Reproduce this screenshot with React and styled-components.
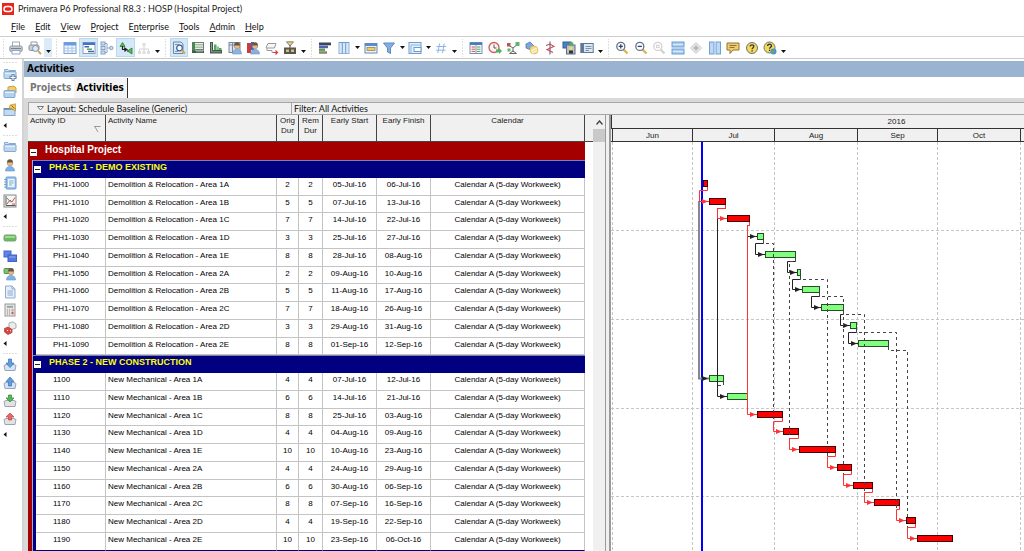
import React from "react";
import styled, { createGlobalStyle, css } from "styled-components";

const ui = '"Lato", "Open Sans", sans-serif';
const caption = '"DejaVu Sans Condensed", "DejaVu Sans", sans-serif';
const plain = '"Liberation Sans", Arial, sans-serif';

const GlobalStyle = createGlobalStyle`
  *, *::before, *::after { box-sizing: border-box; }
  body { margin: 0; background: #fff; color: #222; font-family: ${plain}; }
  button { margin: 0; padding: 0; border: 0; background: none; color: inherit; font: inherit; }
`;

/* ---------- shell ---------- */

const Window = styled.div`
  display: flex;
  flex-direction: column;
  min-height: 100vh;
  overflow: hidden;
`;

const TitleBar = styled.header`
  display: flex;
  align-items: center;
  gap: 4px;
  height: 18px;
  padding-left: 2px;
  font: 9px/18px ${ui};
`;

const MenuBar = styled.nav`
  display: flex;
  align-items: center;
  gap: 10px;
  height: 19px;
  padding-left: 11px;
  border-bottom: 1px solid #cfcfcf;
  font: 9px/18px ${ui};
  color: #111;
`;

const Mnemonic = styled.span`
  text-decoration: underline;
`;

const ToolBar = styled.div`
  display: flex;
  height: 22px;
  border-bottom: 1px solid #c8c8c8;
`;

const ToolGroup = styled.div`
  display: flex;
  align-items: center;
  &::before {
    content: "";
    width: ${(p) => (p.$first ? 7 : 9)}px;
    height: 18px;
    background: radial-gradient(circle, #bdbdbd 1px, transparent 1px) center / 3px 3px repeat-y;
  }
`;

const ToolButton = styled.button`
  display: flex;
  align-items: center;
  justify-content: center;
  width: 18px;
  height: 19px;
  &:nth-of-type(even) { width: 19px; }
  ${(p) => p.$on && css`
    background: #d5e8f8;
    box-shadow: inset 0 0 0 1px #b9d8f2;
  `}
`;

const DropButton = styled.button`
  display: flex;
  align-items: center;
  justify-content: center;
  width: 8px;
  height: 19px;
`;

const MoreButton = styled(DropButton)`
  align-items: flex-end;
  padding-bottom: 4px;
  background: ${(p) => (p.$lit ? "#dcebf8" : "none")};
`;

const Body = styled.div`
  display: flex;
  flex: 1;
`;

const SideBar = styled.aside`
  display: flex;
  flex-direction: column;
  flex: 0 0 24px;
  padding-right: 3px;
  border-right: 2px solid #d4d4d4;
`;

const SideGroup = styled.div`
  display: flex;
  flex-direction: column;
  &::before {
    content: "";
    height: 6px;
    margin: 0 1px 0 2px;
    background: radial-gradient(circle, #bdbdbd 1px, transparent 1px) center / 3px 3px repeat-x;
  }
`;

const SideButton = styled.button`
  display: flex;
  align-items: center;
  justify-content: center;
  height: 18px;
`;

const SideMore = styled.button`
  display: flex;
  align-items: center;
  height: 13px;
  padding-left: 3px;
`;

const Main = styled.main`
  display: flex;
  flex-direction: column;
  flex: 1;
  min-width: 0;
`;

const ViewTitle = styled.h1`
  height: 16px;
  margin: 2px 0 1px;
  padding-left: 3px;
  background: #9ab3d0;
  color: #000;
  font: bold 10px/16px ${caption};
`;

const Tabs = styled.div`
  display: flex;
  height: 20px;
`;

const Tab = styled.button`
  padding: 0 3px 0 ${(p) => (p.$active ? 2 : 6)}px;
  font: bold 10px/20px ${caption};
  color: ${(p) => (p.$active ? "#000" : "#777")};
  background: ${(p) => (p.$active ? "#f4f4f4" : "none")};
  border-right: ${(p) => (p.$active ? "1px solid #333" : "0")};
`;

const Workspace = styled.section`
  display: flex;
  flex-direction: column;
  flex: 1;
  padding: 4px 0 0 4px;
  background: #d9d9d9;
`;

const LayoutBar = styled.div`
  display: flex;
  height: 13px;
  border: solid #a6a6a6;
  border-width: 1px 0 1px 1px;
  background: #f0f0f0;
  font: 9px/12px ${ui};
  color: #111;
`;

const LayoutName = styled.button`
  display: flex;
  align-items: center;
  gap: 3px;
  flex: 0 0 263px;
  padding-left: 8px;
  border-right: 1px solid #a6a6a6;
`;

const FilterName = styled.div`
  padding-left: 2px;
`;

const Split = styled.div`
  display: flex;
  flex: 1;
`;

/* ---------- activity table ---------- */

const TablePane = styled.div`
  flex: 0 0 565px;
  background: linear-gradient(#f0f0f0 26px, #444 26px, #444 27px, #fff 27px);
`;

const Table = styled.table`
  width: 557px;
  table-layout: fixed;
  border-collapse: separate;
  border-spacing: 0;
  background: #fff;
`;

const HeadCell = styled.th`
  height: 27px;
  padding: 1px 2px 0;
  border-right: 1px solid #444;
  border-bottom: 1px solid #444;
  background: #f0f0f0;
  vertical-align: top;
  text-align: ${(p) => (p.$left ? "left" : "center")};
  font: 8px/10px ${plain};
  color: #222;
`;

const SortMark = styled.svg`
  display: block;
  margin: 0 2px 0 auto;
`;

const Row = styled.tr`
  height: 18px;
  &:nth-child(4n) { height: 17px; }
`;

const Cell = styled.td`
  height: inherit;
  padding: 0 2px 0 ${(p) => (p.$indent ? 17 : 2)}px;
  border-right: 1px solid #c4c4c4;
  border-bottom: 1px solid #c4c4c4;
  vertical-align: top;
  text-align: ${(p) => (p.$left ? "left" : "center")};
  white-space: nowrap;
  font: 8px/13px ${plain};
  color: #000;
  tr:last-child > & { border-bottom-color: #000080; }
`;

const Strip = styled.td`
  padding: 0;
  background: ${(p) => p.$color};
  border-right: ${(p) => (p.$edge ? "1px solid #a9a9cf" : "0")};
`;

const Band = styled.td`
  height: inherit;
  padding: 0 0 0 ${(p) => (p.$top ? 2 : 1)}px;
  background: ${(p) => (p.$top ? "#a50000" : "#000080")};
  border-top: ${(p) => (p.$top ? "0" : "1px solid #7f7fb8")};
  vertical-align: top;
  color: ${(p) => (p.$top ? "#fff" : "#ff0")};
  font: ${(p) => (p.$top ? "bold 10px/16px" : "bold 9px/13px")} ${plain};
`;

const BandLine = styled.div`
  display: flex;
  gap: 8px;
  height: ${(p) => (p.$top ? 16 : 14)}px;
`;

const Collapse = styled.button`
  display: flex;
  align-items: center;
  align-self: flex-end;
  justify-content: center;
  width: 7px;
  height: 7px;
  margin-bottom: 2px;
  background: #fff;
  &::before {
    content: "";
    width: 5px;
    height: 1px;
    background: #222;
  }
`;

const ScrollBar = styled.div`
  flex: 0 0 12px;
  background: #f0f0f0;
`;

const ScrollUp = styled.button`
  display: flex;
  align-items: center;
  justify-content: center;
  width: 100%;
  height: 14px;
`;

const Thumb = styled.div`
  height: 13px;
  background: #c9c9c9;
`;

const Splitter = styled.div`
  flex: 0 0 6px;
  border: solid #9a9a9a;
  border-width: 0 2px 0 1px;
  background: #f0f0f0;
`;

/* ---------- gantt ---------- */

const GanttPane = styled.div`
  display: flex;
  flex-direction: column;
  flex: 1;
  min-width: 0;
  overflow: hidden;
  background: #fff;
`;

const Scale = styled.div`
  display: flex;
  background: #f0f0f0;
  border-bottom: 1px solid #333;
  font: 8px/13px ${plain};
  color: #222;
  text-align: center;
`;

const Year = styled.div`
  flex: 0 0 570px;
  height: 13px;
  border-left: 1px solid #333;
`;

const Month = styled.div`
  flex: 0 0 ${(p) => p.$w}px;
  height: 12px;
  border-right: 1px solid #333;
`;

const Plot = styled.svg`
  display: block;
  width: 100%;
  height: 409px;
`;

/* ---------- icons ---------- */

const Ico = ({ children, size = 14 }) => (
  <svg width={size} height={size} viewBox="0 0 14 14" fill="none" aria-hidden="true">
    {children}
  </svg>
);

const folder = (
  <>
    <path d="M1.5 4V2.5H5L6 3.5H12.5V4.5" fill="#cfe2f5" stroke="#86a9cf" />
    <rect x="1" y="4.5" width="12" height="7" rx="1" fill="#bcd6f0" stroke="#86a9cf" />
    <path d="M2 6.5H12" stroke="#e4f0fb" />
  </>
);
const lens = (c, inner) => (
  <>
    <path d="M8.5 8.5L12.5 12.5" stroke={c === "#d2d2d2" ? "#d2d2d2" : "#dcb45a"} strokeWidth="2.4" />
    <circle cx="5.8" cy="5.4" r="4" fill="#fff" stroke={c} strokeWidth="1.3" />
    {inner}
  </>
);
const person = (x, shirt) => (
  <>
    <circle cx={x} cy="5" r="2.8" fill="#e7bb88" stroke="#9a7a58" strokeWidth=".6" />
    <path d={`M${x - 2.9} 4.4a2.900 3.200 0 0 1 5.800 0z`} fill="#6b5540" />
    <path d={`M${x - 4.5} 13c0-3 1.500-4.500 4.500-4.500s4.500 1.500 4.500 4.500z`} fill={shirt} stroke="#6d95c2" strokeWidth=".6" />
  </>
);
const tray = (c) => (
  <path d="M1 7.500L3 6.500H11L13 7.500L12 12.500H2Z" fill={c} stroke="#9aa5b2" />
);

const icons = {
  print: (
    <>
      <rect x="3.500" y="1" width="7" height="5" fill="#fff" stroke="#a5a9b0" />
      <rect x=".8" y="5" width="12.400" height="5.500" rx="1.500" fill="#c4ccd6" stroke="#8e97a5" />
      <path d="M2 7.500H12" stroke="#78828f" />
      <path d="M3 9.500H11V13H3Z" fill="#fff" stroke="#8fa6c4" />
    </>
  ),
  preview: (
    <>
      <path d="M3 4V1H9V4" fill="#fff" stroke="#999" />
      <rect x="1" y="4" width="10" height="5.500" rx="1.500" fill="#c9ced4" stroke="#8a919b" />
      <circle cx="7.500" cy="7.500" r="3" fill="#dfeaf5" stroke="#7d90a8" />
      <path d="M10 10L13 13" stroke="#c9a467" strokeWidth="2" />
    </>
  ),
  table: (
    <>
      <rect x="1" y="1.500" width="12" height="11" fill="#f2f8fe" stroke="#7fa3cf" />
      <rect x="1" y="1.500" width="12" height="3" fill="#6a9be0" />
      <path d="M5 4.500V12.500M9 4.500V12.500M1 7.200H13M1 9.900H13" stroke="#9dbbe0" strokeWidth=".8" />
    </>
  ),
  gantt: (
    <>
      <rect x="1" y="1.500" width="12" height="11" fill="#fff" stroke="#8f9fb5" />
      <rect x="1" y="1.500" width="12" height="2.500" fill="#3f75cc" />
      <path d="M2.500 5.800H7M6 10.500H12" stroke="#3b66b8" strokeWidth="1.400" />
      <path d="M5 8.200H10" stroke="#4d9d50" strokeWidth="1.400" />
    </>
  ),
  network: (
    <>
      <path d="M4 2.500H7V11.500H4M7 7H10" stroke="#93a5bb" />
      <rect x="1" y="1" width="4" height="3" fill="#cfe0f4" stroke="#7fa0c8" />
      <rect x="1" y="5.500" width="4" height="3" fill="#cfe0f4" stroke="#7fa0c8" />
      <rect x="1" y="10" width="4" height="3" fill="#cfe0f4" stroke="#7fa0c8" />
      <circle cx="11.300" cy="7" r="1.700" fill="#cfe0f4" stroke="#7fa0c8" />
    </>
  ),
  trace: (
    <>
      <path d="M1 5.500L3.500 1.500L6 5.500Z" fill="#5cb85c" stroke="#2a7a2a" strokeWidth=".8" />
      <path d="M3.500 5V8.500H6M8 10H10" stroke="#222" strokeWidth="1.200" />
      <path d="M5 6L9 8.500L5.500 11Z" fill="#222" />
      <path d="M13 7L8.500 10L13 13Z" fill="#5cb85c" stroke="#2a7a2a" strokeWidth=".8" />
    </>
  ),
  tree: (
    <>
      <path d="M7 5V8M2.500 10V8H11.500V10M7 8V10" stroke="#d4d4d4" />
      <rect x="5.500" y="2" width="3" height="3" fill="#dedede" />
      <rect x="1" y="10" width="3" height="3" fill="#dedede" />
      <rect x="5.500" y="10" width="3" height="3" fill="#dedede" />
      <rect x="10" y="10" width="3" height="3" fill="#dedede" />
    </>
  ),
  detail: (
    <>
      <path d="M1.500 1H9L11 3V12.500H1.500Z" fill="#dbe8f6" stroke="#6c87a8" />
      <path d="M3 3.500H7M3 10.500H6" stroke="#7d95b3" />
      <circle cx="7.500" cy="7" r="2.800" fill="#f5fbff" stroke="#3d618f" strokeWidth="1.200" />
      <path d="M9.800 9.300L13 12.500" stroke="#cfa64a" strokeWidth="2" />
    </>
  ),
  sheet: (
    <>
      <rect x="3" y="1.500" width="9.500" height="7" fill="#e6eee6" stroke="#6f8574" />
      <rect x="1" y="1" width="3" height="11" fill="#4f8656" />
      <path d="M4 3.800H12M4 6.200H12" stroke="#8fa893" />
      <path d="M1 9.500H13V12H1Z" fill="#47574c" />
      <path d="M5 10.800H12" stroke="#8fb596" />
    </>
  ),
  histogram: (
    <>
      <path d="M1 1H4V9H13V12.500H1Z" fill="#47574c" />
      <path d="M2.500 2V10.800H12" stroke="#8fb596" strokeWidth=".8" />
      <rect x="5" y="3.500" width="2.500" height="5.500" fill="#5aa563" />
      <rect x="7.500" y="5.500" width="2.500" height="3.500" fill="#86c68c" />
      <rect x="10" y="7" width="2.500" height="2" fill="#5aa563" />
    </>
  ),
  resource: (
    <>
      <rect x="1" y="1.500" width="11" height="10" fill="#dce6f0" stroke="#7688a0" />
      <path d="M1 4H12M4.500 2V12" stroke="#7688a0" />
      {person(9, "#8db4e0")}
    </>
  ),
  usage: (
    <>
      <rect x="1" y="2" width="4" height="10" fill="#cf3a3a" />
      <rect x="5" y="1" width="3" height="8" fill="#3f64c0" />
      {person(9, "#86aede")}
    </>
  ),
  relation: (
    <>
      <path d="M1 6.500L3 2.500H11L9.500 7H2Z" fill="#f6f6f6" stroke="#9a9a9a" />
      <path d="M2 7V9.500H7V11.500H9" stroke="#9a9a9a" />
      <path d="M8 11.500H12.500M10.500 9.500L12.500 11.500L10.500 13.500" stroke="#d93c3c" strokeWidth="1.200" />
    </>
  ),
  timescale: (
    <>
      <path d="M3.500 .8H10.500L7 5Z" fill="#e3cf94" stroke="#7a6b45" strokeWidth=".8" />
      <path d="M7 4V7" stroke="#555" />
      <rect x="1" y="6.500" width="12" height="6.500" fill="#5a5648" />
      <path d="M3 8.500H6V11H3ZM8 8.500H11V11H8Z" fill="#cbbd8b" />
    </>
  ),
  bars: (
    <>
      <rect x="1" y="1.500" width="12" height="2.800" fill="#3d4652" />
      <rect x="1" y="4.600" width="9" height="2.600" fill="#4c62b4" />
      <rect x="1" y="7.500" width="6" height="2.400" fill="#58985c" />
      <rect x="1" y="10.200" width="8" height="2.600" fill="#8b8a6a" />
    </>
  ),
  columns: (
    <>
      <rect x="2" y="1.500" width="10" height="11" fill="#d8e8f8" stroke="#8fb4de" />
      <path d="M5.300 1.500V12.500M8.700 1.500V12.500" stroke="#6f9cd0" />
      <path d="M2 1.500H12" stroke="#6f9cd0" />
    </>
  ),
  group: (
    <>
      <rect x="1" y="2.500" width="12" height="9.500" fill="#eaf3fc" stroke="#6789b8" />
      <rect x="1" y="2.500" width="12" height="2.500" fill="#5c8cd0" />
      <rect x="3" y="6.500" width="8" height="3" fill="#f0cf6a" stroke="#8c7a45" strokeWidth=".7" />
    </>
  ),
  filter: <path d="M1.500 2H12.500L8.500 7V12.500L5.500 11V7Z" fill="#82aee2" stroke="#5b8ac4" />,
  layout: (
    <>
      <rect x="1" y="1.500" width="12" height="11" fill="#e3effb" stroke="#6f9cd0" />
      <path d="M3 4H13M3 4V12.500" stroke="#8fb4de" />
      <rect x="6" y="6.500" width="7" height="4" fill="#fff" stroke="#6f9cd0" />
    </>
  ),
  hash: <path d="M5.500 2.500L3.800 12M10.200 2.500L8.500 12M2.500 5.500H12M2 9.200H11.500" stroke="#8db5e2" />,
  assign: (
    <>
      <rect x="1" y="1.500" width="12" height="11" fill="#fff" stroke="#7b90ae" />
      <rect x="1" y="1.500" width="12" height="2.500" fill="#4a7cc4" />
      <path d="M2.500 6H6M2.500 8.200H6M2.500 10.400H6" stroke="#cf4d4d" />
      <path d="M8 6H11.500M8 8.200H11.500M8 10.400H11.500" stroke="#4da05a" />
      <path d="M7 4V12.500" stroke="#7b90ae" />
    </>
  ),
  schedule: (
    <>
      <circle cx="6" cy="6.500" r="5" fill="#fff3f3" stroke="#ce5b5b" strokeWidth="1.300" />
      <path d="M6 3.500V7H8.500" stroke="#555" />
      <path d="M8 8.500H11V7L14 10L11 13V11.500H8Z" fill="#4db35a" />
    </>
  ),
  level: (
    <>
      <path d="M3 4.500L7 7L12 3M7 7V11M3.500 12.500H10.500L7 10Z" stroke="#666" />
      <rect x="1" y="2" width="3.500" height="3.500" fill="#b35a4a" />
      <rect x="9.500" y="1" width="4" height="4" fill="#61b567" />
      <rect x="1.500" y="7.500" width="3" height="3" fill="#61b567" />
    </>
  ),
  progress: (
    <>
      <path d="M1 3L5 1L9 5L6 9L1 7Z" fill="#7fa8da" stroke="#4f76a8" strokeWidth=".8" />
      <circle cx="9" cy="9" r="4" fill="#f3dc83" stroke="#d9bd62" strokeWidth=".8" />
      <path d="M6 10L12 7M7 12L12 9.500" stroke="#fff" />
    </>
  ),
  spotlight: (
    <>
      <path d="M7 .5V13.500" stroke="#5b6fae" strokeWidth="1.200" />
      <path d="M3 4.500L7 3L11 5.500L4 8.500L10 11.500" stroke="#d44848" strokeWidth="1.100" />
    </>
  ),
  save: (
    <>
      <rect x="1" y="1" width="8" height="6" fill="#4d7fc8" stroke="#2f5a99" />
      <rect x="4.500" y="4" width="8.500" height="9" fill="#b9c2cc" stroke="#5f6c7a" />
      <path d="M7 12.500V9.500H11V12.500" fill="#333" />
      <circle cx="8.800" cy="7.200" r="1.800" fill="#f0d66b" />
      <circle cx="9.500" cy="3" r="2" fill="#5cad62" />
    </>
  ),
  card: (
    <>
      <rect x=".8" y="2.500" width="12.400" height="9" fill="#dbe7f3" stroke="#61778f" />
      <rect x="1" y="3" width="3" height="8" fill="#5b7ba3" />
      <path d="M5.500 5.500H11.500M5.500 7.500H11.500M5.500 9.500H9" stroke="#7b92ad" />
    </>
  ),
  zoomIn: lens("#62728a", <path d="M5.800 3.300V7.500M3.700 5.400H7.900" stroke="#2a4470" strokeWidth="1.300" />),
  zoomOut: lens("#62728a", <path d="M3.700 5.400H7.900" stroke="#2a4470" strokeWidth="1.300" />),
  zoomFit: lens("#d2d2d2", <rect x="4.500" y="4.200" width="2.600" height="2.400" stroke="#d2d2d2" />),
  split: (
    <>
      <rect x="1" y="1" width="12" height="5" fill="#a8cbf0" stroke="#6e9fd4" />
      <rect x="1" y="8" width="12" height="5" fill="#a8cbf0" stroke="#6e9fd4" />
      <path d="M2 3.500H12M2 10.500H12" stroke="#dcecfb" />
    </>
  ),
  diamond: (
    <>
      <path d="M7 1.500L12.500 7L7 12.500L1.500 7Z" fill="#e2e2e2" stroke="#cfcfcf" />
      <path d="M7 4.500V9.500M4.500 7H9.500" stroke="#b0b0b0" strokeWidth="1.500" />
    </>
  ),
  panes: (
    <>
      <rect x="1.500" y="1" width="4.500" height="12" fill="#bcd8f4" stroke="#6e9fd4" />
      <rect x="8" y="1" width="4.500" height="12" fill="#bcd8f4" stroke="#6e9fd4" />
    </>
  ),
  comment: (
    <>
      <path d="M1 2H13V9H7L4 12.500V9H1Z" fill="#f0cd6c" stroke="#8e743a" />
      <path d="M3.500 4.500H10.500M3.500 6.500H8.500" stroke="#8e743a" />
    </>
  ),
  help: (
    <>
      <circle cx="7" cy="7" r="5.500" fill="#f6d952" stroke="#6b7484" />
      <path d="M5.200 5.500C5.200 3.200 9 3.400 8.800 5.500C8.700 6.700 7.100 6.700 7.100 8.300M7.100 9.300V10.600" stroke="#27364f" strokeWidth="1.300" />
    </>
  ),
  helpOnline: (
    <>
      <circle cx="6.500" cy="6.500" r="5.500" fill="#f6d952" stroke="#6b7484" />
      <path d="M4.600 5C4.600 2.500 8.600 2.700 8.500 5C8.400 6.300 6.600 6.300 6.600 7.800M6.600 8.800V10" stroke="#27364f" strokeWidth="1.300" />
      <circle cx="10.500" cy="10.500" r="3" fill="#4d8fd6" />
      <path d="M8.500 10L10.500 8.500L11.500 11L10 13Z" fill="#59b45d" />
    </>
  ),
  folderAdd: (
    <>
      {folder}
      <path d="M10 7V14M6.500 10.500H13.500" stroke="#6687ac" strokeWidth="3" />
      <path d="M10 8V13M7.500 10.500H12.500" stroke="#fff" />
    </>
  ),
  folderOpen: (
    <>
      <path d="M5 5V2L11 1L13 3V8" fill="#f2cd75" stroke="#c9a03e" />
      <rect x="1" y="5.500" width="11" height="7" rx="1" fill="#b5d1ee" stroke="#7fa6d0" />
      <path d="M2 7.500H11" stroke="#e6f1fb" />
    </>
  ),
  folderStar: (
    <>
      <rect x="1" y="5.500" width="11" height="7" fill="#c3daf1" stroke="#7fa6d0" />
      <path d="M1 6H12" stroke="#5c7fa8" strokeWidth="1.400" />
      <path d="M7 2L12.500 .8V8L10 6.500L8.500 5.500H6Z" fill="#f2c558" stroke="#b98620" strokeWidth=".6" />
      <path d="M8.500 2.500L11.500 5.500" stroke="#8a6a28" />
    </>
  ),
  folder,
  person: person(7, "#7eb3ea"),
  book: (
    <>
      <rect x="3" y="1" width="10" height="12" rx="1" fill="#9cc4ee" stroke="#6c9ad0" />
      <rect x="5" y="3" width="6.500" height="8" fill="#eef6fd" />
      <path d="M6 5H10.500M6 7H10.500M6 9H9M1 3.500H4M1 6H4M1 8.500H4M1 11H4" stroke="#6d94c4" strokeWidth=".8" />
    </>
  ),
  chart: (
    <>
      <rect x="1" y="1" width="12" height="12" fill="#f5f5f5" stroke="#888" />
      <path d="M3 2V11.500H12.500" stroke="#555" />
      <path d="M4 10L7 6L9 8L12 3.500M9 10H12" stroke="#d05050" />
      <path d="M4 4L8 8.500" stroke="#59a05d" />
    </>
  ),
  pill: (
    <>
      <rect x="1" y="4" width="12" height="6" rx="1.500" fill="#69bd5c" stroke="#76a070" />
      <path d="M2 6H12" stroke="#b8e6ae" strokeWidth="1.400" />
    </>
  ),
  blocks: (
    <>
      <rect x="1" y="2" width="7" height="6" fill="#5f84e4" stroke="#4467c8" />
      <rect x="5" y="6" width="8.500" height="6.500" fill="#5478e0" stroke="#3f62c8" />
      <path d="M6 8H12.500" stroke="#96b0f2" />
    </>
  ),
  roles: (
    <>
      <rect x="1" y="1.500" width="9" height="5" rx="1" fill="#7cc473" stroke="#568f52" />
      {person(8, "#7eb3ea")}
    </>
  ),
  page: (
    <>
      <path d="M2.500 1H9L12 4V13H2.500Z" fill="#e7f0fa" stroke="#8faace" />
      <path d="M9 1V4H12M4.500 6H10M4.500 8H10M4.500 10H10" stroke="#8faace" />
    </>
  ),
  calc: (
    <>
      <rect x="2" y="1" width="10" height="12" fill="#e6e6e6" stroke="#999" />
      <rect x="4" y="2.800" width="6" height="2" fill="#9aa7a0" />
      <path d="M4 7H7M4 9H7M4 11H7" stroke="#888" strokeDasharray="1 1" />
      <path d="M8.500 7H10.500" stroke="#999" strokeWidth="1.500" />
      <path d="M8.500 10H10.500" stroke="#df5340" strokeWidth="2.500" />
    </>
  ),
  dice: (
    <>
      <path d="M6 2L10 .8L13 3V7L9 8.500L6 6.500Z" fill="#ececec" stroke="#999" strokeWidth=".8" />
      <path d="M1.500 7.500L5 6L9 8.500V11.500L5 13.500L1.500 11Z" fill="#d64848" stroke="#b54040" strokeWidth=".8" />
      <path d="M4 9L5 10M7 10L8 9.500" stroke="#fff" />
    </>
  ),
  trayIn: (
    <>
      {tray("#d3e4f5")}
      <path d="M5.500 1H8.500V5H11L7 9.500L3 5H5.500Z" fill="#5f9ee0" stroke="#3a72b5" strokeWidth=".7" />
    </>
  ),
  trayOut: (
    <>
      {tray("#d3e4f5")}
      <path d="M5.500 10H8.500V5.500H11L7 1L3 5.500H5.500Z" fill="#5f9ee0" stroke="#3a72b5" strokeWidth=".7" />
    </>
  ),
  trayGreen: (
    <>
      {tray("#e2e2e2")}
      <path d="M5.500 1H8.500V4H11L7 8L3 4H5.500Z" fill="#55b558" stroke="#338536" strokeWidth=".7" />
    </>
  ),
  trayRed: (
    <>
      {tray("#e2e2e2")}
      <path d="M5.500 8H8.500V5H11L7 1L3 5H5.500Z" fill="#e56a6a" stroke="#c04444" strokeWidth=".7" />
    </>
  ),
};

const Down = () => (
  <svg width="5" height="3" viewBox="0 0 5 3" aria-hidden="true">
    <path d="M0 0H5L2.500 3Z" fill="#111" />
  </svg>
);

/* ---------- data ---------- */

const menus = [
  ["", "F", "ile"],
  ["", "E", "dit"],
  ["", "V", "iew"],
  ["", "P", "roject"],
  ["E", "n", "terprise"],
  ["", "T", "ools"],
  ["", "A", "dmin"],
  ["", "H", "elp"],
];

const toolGroups = [
  ["print", "preview"],
  ["table", "gantt", "network", "trace", "tree"],
  ["detail", "sheet", "histogram", "resource", "usage", "relation", "timescale"],
  ["bars", "columns", "group", "filter", "layout", "hash"],
  ["assign", "schedule", "level", "progress", "spotlight", "save", "card"],
  ["zoomIn", "zoomOut", "zoomFit", "split", "diamond", "panes", "comment", "help", "helpOnline"],
];
const pressed = new Set(["gantt", "trace", "detail"]);
const withMenu = new Set(["columns", "filter", "layout"]);

const sideGroups = [
  ["folderAdd", "folderOpen", "folderStar"],
  ["folder", "person", "book", "chart"],
  ["pill", "blocks", "roles", "page", "calc", "dice"],
  ["trayIn", "trayOut", "trayGreen", "trayRed"],
];

const phases = [
  {
    name: "PHASE 1 - DEMO EXISTING",
    work: "Demolition & Relocation",
    rows: [
      ["PH1-1000", "1A", 2, "05-Jul-16", "06-Jul-16", true],
      ["PH1-1010", "1B", 5, "07-Jul-16", "13-Jul-16", true],
      ["PH1-1020", "1C", 7, "14-Jul-16", "22-Jul-16", true],
      ["PH1-1030", "1D", 3, "25-Jul-16", "27-Jul-16"],
      ["PH1-1040", "1E", 8, "28-Jul-16", "08-Aug-16"],
      ["PH1-1050", "2A", 2, "09-Aug-16", "10-Aug-16"],
      ["PH1-1060", "2B", 5, "11-Aug-16", "17-Aug-16"],
      ["PH1-1070", "2C", 7, "18-Aug-16", "26-Aug-16"],
      ["PH1-1080", "2D", 3, "29-Aug-16", "31-Aug-16"],
      ["PH1-1090", "2E", 8, "01-Sep-16", "12-Sep-16"],
    ],
  },
  {
    name: "PHASE 2 - NEW CONSTRUCTION",
    work: "New Mechanical",
    rows: [
      ["1100", "1A", 4, "07-Jul-16", "12-Jul-16"],
      ["1110", "1B", 6, "14-Jul-16", "21-Jul-16"],
      ["1120", "1C", 8, "25-Jul-16", "03-Aug-16", true],
      ["1130", "1D", 4, "04-Aug-16", "09-Aug-16", true],
      ["1140", "1E", 10, "10-Aug-16", "23-Aug-16", true],
      ["1150", "2A", 4, "24-Aug-16", "29-Aug-16", true],
      ["1160", "2B", 6, "30-Aug-16", "06-Sep-16", true],
      ["1170", "2C", 8, "07-Sep-16", "16-Sep-16", true],
      ["1180", "2D", 4, "19-Sep-16", "22-Sep-16", true],
      ["1190", "2E", 10, "23-Sep-16", "06-Oct-16", true],
    ],
  },
];

const months = [
  ["", 2],
  ["Jun", 80],
  ["Jul", 82],
  ["Aug", 83],
  ["Sep", 80],
  ["Oct", 83],
];

/* ---------- chart geometry ---------- */

const DAY = 2.67;
const JULY = 81;
const monthStart = { Jul: 0, Aug: 31, Sep: 62, Oct: 92 };
const dayOf = (date) => {
  const [d, m] = date.split("-");
  return monthStart[m] + Number(d) - 1;
};
// Every fourth table row is one pixel shorter than the rest.
const rowTop = (i) => 18 * i - Math.floor(i / 4);

const bars = phases.flatMap((phase, p) =>
  phase.rows.map(([id, , , start, finish, critical], r) => ({
    id,
    critical,
    x1: Math.round(JULY + (dayOf(start) + 0.2) * DAY),
    x2: Math.round(JULY + (dayOf(finish) + 0.9) * DAY),
    y: rowTop(2 + p * 11 + r) + 2,
  }))
);
const barOf = Object.fromEntries(bars.map((b) => [b.id.slice(-4), b]));

const RED = "#f33";
const BLACK = "#222";
const links = [
  ["1000", "1100", "#888", "double"],
  ["1010", "1110", BLACK],
  ["1020", "1030", BLACK],
  ["1030", "1040", BLACK],
  ["1040", "1050", BLACK],
  ["1050", "1060", BLACK],
  ["1060", "1070", BLACK],
  ["1070", "1080", BLACK],
  ["1080", "1090", BLACK],
  ["1100", "1110", BLACK, "dash"],
  ["1110", "1120", BLACK, "stub"],
  ["1030", "1130", BLACK, "dash"],
  ["1040", "1140", BLACK, "dash"],
  ["1050", "1150", BLACK, "dash"],
  ["1060", "1160", BLACK, "dash"],
  ["1070", "1170", BLACK, "dash"],
  ["1080", "1180", BLACK, "dash"],
  ["1090", "1190", BLACK, "dash"],
  ["1000", "1010", RED],
  ["1010", "1020", RED],
  ["1020", "1120", RED],
  ["1120", "1130", RED],
  ["1130", "1140", RED],
  ["1140", "1150", RED],
  ["1150", "1160", RED],
  ["1160", "1170", RED],
  ["1170", "1180", RED],
  ["1180", "1190", RED],
];

const linkPath = (a, b, kind) => {
  const elbow = b.x1 - 9.5;
  const end = a.x2 - 0.5;
  const drop = a.y + 10.5;
  const y = b.y + 3.5;
  if (kind === "stub") return `M${end} ${a.y + 7}V${drop}`;
  if (kind === "double") return `M${elbow - 0.5} ${a.y + 21}V${y}H${b.x1}`;
  if (kind === "dash") return `M${end} ${a.y + 7}V${drop}H${elbow}V${Math.max(drop, y - 8)}`;
  return `M${end} ${a.y + 7}V${drop}H${elbow}V${y}H${b.x1}`;
};

const Link = ({ from, to, color, kind }) => {
  const a = barOf[from];
  const b = barOf[to];
  const y = b.y + 3.5;
  const headed = kind !== "dash" && kind !== "stub";
  return (
    <>
      <path
        d={linkPath(a, b, kind)}
        fill="none"
        stroke={kind === "dash" ? "#444" : color}
        strokeWidth={kind === "double" ? 2 : 1}
        strokeDasharray={kind === "dash" ? "3 3" : undefined}
      />
      {headed && (
        <path
          d={`M${b.x1 - 7} ${y - 2.5}L${b.x1 - 1} ${y}L${b.x1 - 7} ${y + 2.5}Z`}
          fill={kind === "double" ? BLACK : color}
        />
      )}
    </>
  );
};

const gridX = months.reduce((acc, [, w]) => [...acc, (acc[acc.length - 1] || 0) + w], []);

const Gantt = () => (
  <Plot role="img" aria-label="Gantt chart">
    <g stroke="#c6c6c6" strokeDasharray="3 2">
      {gridX.map((x) => (
        <line key={x} x1={x - 0.5} x2={x - 0.5} y1="0" y2="100%" />
      ))}
      {[5, 10, 15, 20].map((i) => (
        <line key={i} x1="0" x2="100%" y1={rowTop(i) - 0.5} y2={rowTop(i) - 0.5} />
      ))}
    </g>
    <rect x="90" y="0" width="2" height="100%" fill="#00f" />
    {bars.map((b) => (
      <rect
        key={b.id}
        x={b.x1 + 0.5}
        y={b.y + 0.5}
        width={b.x2 - b.x1 - 1}
        height="6"
        fill={b.critical ? "#f00" : "#80ff80"}
        stroke={b.critical ? "#400" : "#264d26"}
      />
    ))}
    {links.map(([from, to, color, kind]) => (
      <Link key={from + to} from={from} to={to} color={color} kind={kind} />
    ))}
  </Plot>
);

/* ---------- page ---------- */

const ActivityTable = () => (
  <Table>
    <colgroup>
      {[5, 3, 70, 171, 22, 24, 54, 54, 154].map((w, i) => (
        <col key={i} width={w} />
      ))}
    </colgroup>
    <thead>
      <tr>
        <HeadCell $left colSpan={3}>
          Activity ID
          <SortMark width="7" height="7" viewBox="0 0 7 7" aria-hidden="true">
            <path d="M0 .5H6.500M1 1L4 6" stroke="#999" fill="none" />
          </SortMark>
        </HeadCell>
        <HeadCell $left>Activity Name</HeadCell>
        <HeadCell>Orig Dur</HeadCell>
        <HeadCell>Rem Dur</HeadCell>
        <HeadCell>Early Start</HeadCell>
        <HeadCell>Early Finish</HeadCell>
        <HeadCell>Calendar</HeadCell>
      </tr>
    </thead>
    <tbody>
      <Row>
        <Band $top colSpan={9}>
          <BandLine $top>
            <Collapse aria-label="Collapse project" />
            Hospital Project
          </BandLine>
        </Band>
      </Row>
      {phases.map((phase) => (
        <React.Fragment key={phase.name}>
          <Row>
            <Strip $color="#a50000" $edge />
            <Band colSpan={8}>
              <BandLine>
                <Collapse aria-label="Collapse phase" />
                {phase.name}
              </BandLine>
            </Band>
          </Row>
          {phase.rows.map(([id, area, days, start, finish]) => (
            <Row key={id}>
              <Strip $color="#a50000" $edge />
              <Strip $color="#000080" />
              <Cell $left $indent>{id}</Cell>
              <Cell $left>{`${phase.work} - Area ${area}`}</Cell>
              <Cell>{days}</Cell>
              <Cell>{days}</Cell>
              <Cell>{start}</Cell>
              <Cell>{finish}</Cell>
              <Cell>Calendar A (5-day Workweek)</Cell>
            </Row>
          ))}
        </React.Fragment>
      ))}
    </tbody>
  </Table>
);

export default function App() {
  return (
    <Window>
      <GlobalStyle />
      <TitleBar>
        <svg width="12" height="12" viewBox="0 0 12 12" aria-hidden="true">
          <rect width="12" height="12" fill="#e8261c" />
          <rect x="2" y="3.500" width="8" height="5" rx="2.500" fill="none" stroke="#fff" strokeWidth="1.400" />
        </svg>
        Primavera P6 Professional R8.3 : HOSP (Hospital Project)
      </TitleBar>
      <MenuBar>
        {menus.map(([before, key, after]) => (
          <button key={key}>
            {before}
            <Mnemonic>{key}</Mnemonic>
            {after}
          </button>
        ))}
      </MenuBar>
      <ToolBar>
        {toolGroups.map((group, i) => (
          <ToolGroup key={i} $first={i === 0}>
            {group.map((name) => (
              <React.Fragment key={name}>
                <ToolButton $on={pressed.has(name)} aria-label={name}>
                  <Ico>{icons[name]}</Ico>
                </ToolButton>
                {withMenu.has(name) && (
                  <DropButton aria-label={`${name} menu`}>
                    <Down />
                  </DropButton>
                )}
              </React.Fragment>
            ))}
            <MoreButton $lit={i === 0} aria-label="More tools">
              <Down />
            </MoreButton>
          </ToolGroup>
        ))}
      </ToolBar>
      <Body>
        <SideBar>
          {sideGroups.map((group, i) => (
            <SideGroup key={i}>
              {group.map((name) => (
                <SideButton key={name} aria-label={name}>
                  <Ico>{icons[name]}</Ico>
                </SideButton>
              ))}
              <SideMore aria-label="More tools">
                <svg width="4" height="5" viewBox="0 0 4 5" aria-hidden="true">
                  <path d="M3.500 0V5L.5 2.500Z" fill="#111" />
                </svg>
              </SideMore>
            </SideGroup>
          ))}
        </SideBar>
        <Main>
          <ViewTitle>Activities</ViewTitle>
          <Tabs>
            <Tab>Projects</Tab>
            <Tab $active>Activities</Tab>
          </Tabs>
          <Workspace>
            <LayoutBar>
              <LayoutName>
                <svg width="7" height="5" viewBox="0 0 7 5" aria-hidden="true">
                  <path d="M.5 .5H6.500L3.500 4Z" fill="#fff" stroke="#777" />
                </svg>
                Layout: Schedule Baseline (Generic)
              </LayoutName>
              <FilterName>Filter: All Activities</FilterName>
            </LayoutBar>
            <Split>
              <TablePane>
                <ActivityTable />
              </TablePane>
              <ScrollBar>
                <ScrollUp aria-label="Scroll up">
                  <svg width="7" height="5" viewBox="0 0 7 5" aria-hidden="true">
                    <path d="M.5 4.500L3.500 1L6.500 4.500" fill="none" stroke="#444" strokeWidth="1.400" />
                  </svg>
                </ScrollUp>
                <Thumb />
              </ScrollBar>
              <Splitter />
              <GanttPane>
                <Scale>
                  <Year>2016</Year>
                </Scale>
                <Scale>
                  {months.map(([name, w]) => (
                    <Month key={name} $w={w}>{name}</Month>
                  ))}
                </Scale>
                <Gantt />
              </GanttPane>
            </Split>
          </Workspace>
        </Main>
      </Body>
    </Window>
  );
}
